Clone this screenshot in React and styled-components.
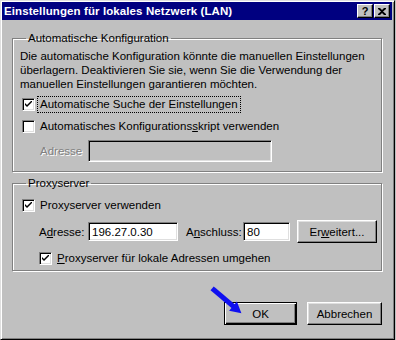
import React from "react";
import styled, { createGlobalStyle } from "styled-components";

const GlobalStyle = createGlobalStyle`
  html, body {
    margin: 0;
    padding: 0;
    background: #c0c0c0;
  }
  body {
    font-family: "Liberation Sans Narrow", "Liberation Sans", Arial, sans-serif;
    font-size: 11.5px;
    color: #000;
  }
`;

const Window = styled.div`
  position: relative;
  box-sizing: border-box;
  width: 395px;
  height: 340px;
  background: #c0c0c0;
  border-top: 1px solid #dfdfdf;
  border-left: 1px solid #dfdfdf;
  border-right: 1px solid #000;
  border-bottom: 1px solid #000;
  box-shadow: inset 1px 1px 0 #fff, inset -1px -1px 0 #808080;
  padding: 1px 2px 2px 1px;
  display: flex;
  flex-direction: column;
`;

const TitleBar = styled.div`
  height: 18px;
  background: #000080;
  display: flex;
  align-items: center;
  justify-content: space-between;
  padding: 0 2px 0 2px;
`;

const Title = styled.span`
  color: #fff;
  font-weight: bold;
  font-size: 11.5px;
  letter-spacing: 0.1px;
`;

const TitleButtons = styled.div`
  display: flex;
  gap: 1px;
`;

const TitleButton = styled.div`
  box-sizing: border-box;
  width: 16px;
  height: 14px;
  background: #c0c0c0;
  border-top: 1px solid #fff;
  border-left: 1px solid #fff;
  border-right: 1px solid #000;
  border-bottom: 1px solid #000;
  box-shadow: inset -1px -1px 0 #808080;
  display: flex;
  align-items: center;
  justify-content: center;
  font-family: "Liberation Sans", Arial, sans-serif;
  font-weight: bold;
  font-size: 11px;
  line-height: 1;
`;

const Body = styled.div`
  flex: 1;
  display: flex;
  flex-direction: column;
  padding: 11px 10px 0 10px;
`;

const Group = styled.fieldset`
  margin: ${(p) => p.$top || 0}px 0 0 0;
  padding: ${(p) => p.$padTop}px 7px ${(p) => p.$padBottom}px 7px;
  border: 1px solid #808080;
  box-shadow: inset 1px 1px 0 #fff, 1px 1px 0 #fff;
  min-width: 0;
  display: flex;
  flex-direction: column;
`;

const Legend = styled.legend`
  margin-left: 6px;
  padding: 0 2px;
  line-height: 14px;
`;

const Text = styled.p`
  margin: 0;
  line-height: 14px;
  white-space: nowrap;
`;

const Row = styled.div`
  display: flex;
  align-items: center;
  height: ${(p) => p.$h || 16}px;
  margin-top: ${(p) => p.$mt || 0}px;
  margin-left: ${(p) => p.$ml || 0}px;
`;

const Box = styled.span`
  box-sizing: border-box;
  width: 13px;
  height: 13px;
  background: #fff;
  border-top: 1px solid #808080;
  border-left: 1px solid #808080;
  border-right: 1px solid #fff;
  border-bottom: 1px solid #fff;
  box-shadow: inset 1px 1px 0 #000, inset -1px -1px 0 #dfdfdf;
  display: inline-flex;
  align-items: center;
  justify-content: center;
  flex: none;
`;

const CheckLabel = styled.span`
  margin-left: 3px;
  padding: 1px 2px;
  line-height: 13px;
  outline: ${(p) => (p.$focus ? "1px dotted #000" : "none")};
  white-space: nowrap;
`;

const FieldLabel = styled.span`
  box-sizing: border-box;
  width: ${(p) => p.$w}px;
  padding-left: ${(p) => p.$pl || 0}px;
  flex: none;
  white-space: nowrap;
  color: ${(p) => (p.$disabled ? "#808080" : "#000")};
  text-shadow: ${(p) => (p.$disabled ? "1px 1px 0 #fff" : "none")};
`;

const Input = styled.div`
  box-sizing: border-box;
  width: ${(p) => p.$w}px;
  height: ${(p) => p.$h || 19}px;
  background: ${(p) => (p.$disabled ? "#c0c0c0" : "#fff")};
  border-top: 1px solid #808080;
  border-left: 1px solid #808080;
  border-right: 1px solid #fff;
  border-bottom: 1px solid #fff;
  box-shadow: inset 1px 1px 0 #000, inset -1px -1px 0 #dfdfdf;
  padding: 0 3px;
  display: flex;
  align-items: center;
  flex: none;
`;

const Button = styled.div`
  box-sizing: border-box;
  width: ${(p) => p.$w}px;
  height: 23px;
  background: #c0c0c0;
  border: 1px solid #000;
  border-top-color: ${(p) => (p.$default ? "#000" : "#fff")};
  border-left-color: ${(p) => (p.$default ? "#000" : "#fff")};
  box-shadow: ${(p) =>
    p.$default
      ? "inset 1px 1px 0 #fff, inset -1px -1px 0 #000, inset -2px -2px 0 #808080"
      : "inset -1px -1px 0 #808080, inset 1px 1px 0 #dfdfdf"};
  display: flex;
  align-items: center;
  justify-content: center;
  flex: none;
  margin-left: ${(p) => p.$ml || 0}px;
`;

const Footer = styled.div`
  display: flex;
  justify-content: flex-end;
  margin-top: 31px;
`;

const Arrow = styled.svg`
  position: absolute;
  left: 207px;
  top: 283px;
`;

const U = styled.span`
  text-decoration: underline;
`;

function Check({ checked }) {
  return (
    <Box>
      {checked && (
        <svg width="7" height="7" viewBox="0 0 7 7">
          <path d="M0 2 L0 4 L2 6 L7 1 L7 -1 L2 4 Z" fill="#000" />
        </svg>
      )}
    </Box>
  );
}

export default function App() {
  return (
    <>
      <GlobalStyle />
      <Window>
        <TitleBar>
          <Title>Einstellungen für lokales Netzwerk (LAN)</Title>
          <TitleButtons>
            <TitleButton>?</TitleButton>
            <TitleButton>
              <svg width="8" height="7" viewBox="0 0 8 7">
                <path
                  d="M0 0h2l2 2 2-2h2v1L5 3.5 8 6v1H6L4 5 2 7H0V6l3-2.5L0 1z"
                  fill="#000"
                />
              </svg>
            </TitleButton>
          </TitleButtons>
        </TitleBar>
        <Body>
          <Group $padTop={4} $padBottom={9}>
            <Legend>Automatische Konfiguration</Legend>
            <Text>
              Die automatische Konfiguration könnte die manuellen Einstellungen
              <br />
              überlagern. Deaktivieren Sie sie, wenn Sie die Verwendung der
              <br />
              manuellen Einstellungen garantieren möchten.
            </Text>
            <Row $mt={5} $ml={2}>
              <Check checked />
              <CheckLabel $focus>Automatische Suche der Einstellungen</CheckLabel>
            </Row>
            <Row $mt={6} $ml={2}>
              <Check />
              <CheckLabel>
                Automatisches Konfigurations<U>s</U>kript verwenden
              </CheckLabel>
            </Row>
            <Row $mt={6} $h={22} $ml={20}>
              <FieldLabel $w={48} $disabled>
                Adresse
              </FieldLabel>
              <Input $w={184} $h={22} $disabled />
            </Row>
          </Group>
          <Group $top={4} $padTop={7} $padBottom={4}>
            <Legend>Proxyserver</Legend>
            <Row $ml={2}>
              <Check checked />
              <CheckLabel>Proxyserver verwenden</CheckLabel>
            </Row>
            <Row $mt={7} $h={23} $ml={19}>
              <FieldLabel $w={49}>
                A<U>d</U>resse:
              </FieldLabel>
              <Input $w={90}>196.27.0.30</Input>
              <FieldLabel $w={65} $pl={8}>
                A<U>n</U>schluss:
              </FieldLabel>
              <Input $w={47}>80</Input>
              <Button $w={80} $ml={7}>
                Er<U>w</U>eitert...
              </Button>
            </Row>
            <Row $mt={7} $ml={19}>
              <Check checked />
              <CheckLabel>
                <U>P</U>roxyserver für lokale Adressen umgehen
              </CheckLabel>
            </Row>
          </Group>
          <Footer>
            <Button $w={73} $default>
              OK
            </Button>
            <Button $w={75} $ml={10}>
              Abbrechen
            </Button>
          </Footer>
        </Body>
        <Arrow width="40" height="36" viewBox="0 0 40 36">
          <path d="M6 6 L25 22" stroke="#1010f0" strokeWidth="5" strokeLinecap="square" />
          <path d="M33.4 29.3 L21.1 26.8 L28.9 17.6 Z" fill="#1010f0" />
        </Arrow>
      </Window>
    </>
  );
}
